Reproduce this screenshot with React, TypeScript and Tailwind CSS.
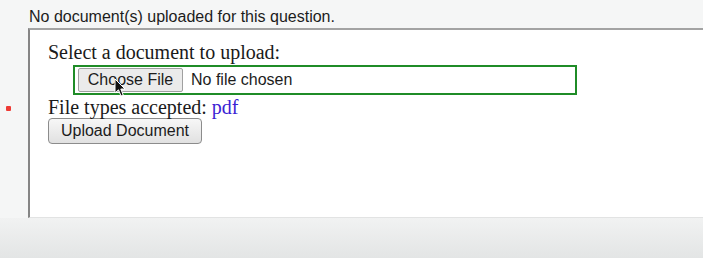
export default function App() {
  return (
    <div className="flex h-[258px] w-[703px] flex-col overflow-hidden bg-[#f5f6f6] font-['Liberation_Sans',Arial,sans-serif] text-[#1c1c1c]">
      {/* Status line */}
      <div className="h-[28px] shrink-0 pl-[29px] pt-[8px] text-[16px] leading-[18px]">
        No document(s) uploaded for this question.
      </div>

      <div className="flex h-[190px] shrink-0">
        {/* Required marker gutter */}
        <div className="w-[28px] shrink-0 pl-[6px] pt-[78px]">
          <span className="block size-[5px] rounded-[1px] bg-[#ee3b35]" />
        </div>

        {/* Upload panel */}
        <div className="relative flex-1 border-t-2 border-l-2 border-t-[#a3a3a3] border-l-[#858585] border-b border-b-[#e2e3e3] bg-white pl-[18px] pt-[11px] font-['Liberation_Serif','Times_New_Roman',serif] text-[20px] leading-[22px] text-[#1a1a1a]">
          <div>Select a document to upload:</div>

          <div className="mt-[2px] ml-[25px] flex h-[30px] w-[504px] items-center border-2 border-[#1f8c27] px-[3px] font-['Liberation_Sans',Arial,sans-serif] text-[16px]">
            <span className="flex h-[24px] w-[105px] items-center justify-center rounded-[2px] border border-[#a0a0a0] bg-[#ebebeb] leading-none text-[#1c1c1c]">
              Choose File
            </span>
            <span className="ml-[8px] leading-none text-[#1c1c1c]">No file chosen</span>
          </div>

          <div className="mt-[1px]">
            File types accepted: <span className="text-[#3a22d4]">pdf</span>
          </div>

          <button className="flex h-[26px] w-[154px] items-center justify-center rounded-[4px] border border-[#8c8c8c] bg-gradient-to-b from-[#f7f7f7] to-[#e1e1e1] font-['Liberation_Sans',Arial,sans-serif] text-[16px] leading-none text-[#1c1c1c]">
            Upload Document
          </button>

          {/* Mouse pointer */}
          <svg
            className="absolute left-[84px] top-[48px]"
            width="12"
            height="20"
            viewBox="0 0 12 20"
          >
            <path
              d="M1 1 L1 15 L4.5 11.8 L7 18 L9.2 17 L6.8 11 L11 11 Z"
              fill="#111"
              stroke="#fff"
              strokeWidth="1"
              strokeLinejoin="round"
            />
          </svg>
        </div>
      </div>

      {/* Lower chrome */}
      <div className="flex-1 bg-gradient-to-b from-[#f1f2f2] to-[#e3e5e5]" />
    </div>
  );
}
